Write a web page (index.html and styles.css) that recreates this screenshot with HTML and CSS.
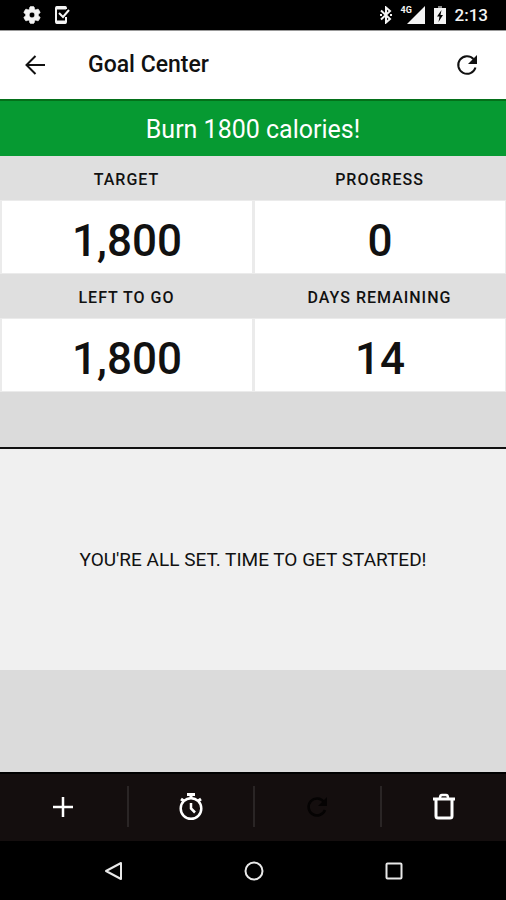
FILE: index.html
```
<!DOCTYPE html>
<html lang="en">
<head>
<meta charset="utf-8">
<meta name="viewport" content="width=device-width, initial-scale=1">
<title>Goal Center</title>
<link rel="stylesheet" href="styles.css">
</head>
<body>
<div class="screen">
  <div class="status">
    <div class="status-group">
      <svg class="icon-status" viewBox="0 0 24 24" aria-hidden="true"><path fill="currentColor" stroke="currentColor" stroke-width="1" d="M19.43 12.98c.04-.32.07-.64.07-.98s-.03-.66-.07-.98l2.11-1.65c.19-.15.24-.42.12-.64l-2-3.46c-.12-.22-.39-.3-.61-.22l-2.49 1c-.52-.4-1.08-.73-1.69-.98l-.38-2.65C14.46 2.18 14.25 2 14 2h-4c-.25 0-.46.18-.49.42l-.38 2.65c-.61.25-1.17.59-1.69.98l-2.49-1c-.23-.09-.49 0-.61.22l-2 3.46c-.13.22-.07.49.12.64l2.11 1.65c-.04.32-.07.65-.07.98s.03.66.07.98l-2.11 1.65c-.19.15-.24.42-.12.64l2 3.46c.12.22.39.3.61.22l2.49-1c.52.4 1.08.73 1.69.98l.38 2.65c.03.24.24.42.49.42h4c.25 0 .46-.18.49-.42l.38-2.65c.61-.25 1.17-.59 1.69-.98l2.49 1c.23.09.49 0 .61-.22l2-3.46c.12-.22.07-.49-.12-.64l-2.11-1.65zM12 15.5c-1.93 0-3.5-1.57-3.5-3.5s1.57-3.5 3.5-3.5 3.5 1.57 3.5 3.5-1.57 3.5-3.5 3.5z"/></svg>
      <svg class="icon-status" viewBox="0 0 20 20" fill="none" stroke="currentColor" aria-hidden="true"><path stroke-width="2" d="M15 4V3q0-1-1-1H6Q5 2 5 3v14q0 1 1 1h8q1 0 1-1v-5"/><path stroke-width="3" d="M5 3h10M5 17h10"/><path stroke-width="2" d="M8 8l4 4 6-7"/></svg>
    </div>
    <div class="status-group">
      <svg class="icon-bluetooth" viewBox="0 0 12 18" fill="none" stroke="currentColor" stroke-width="2" aria-hidden="true"><path d="M1 4.500l9 8.500-4 3.500v-15L10 5l-9 8.500"/><path d="M0 9h2M10 9h2"/></svg>
      <div class="signal">
        <svg class="icon-signal" viewBox="0 0 24 18" aria-hidden="true"><path fill="currentColor" d="M24 0v18H6z"/></svg>
        <span class="network">4G</span>
      </div>
      <svg class="icon-battery" viewBox="0 0 12 18" aria-hidden="true"><path fill="#888" d="M4 0h4v2H4z"/><path fill="currentColor" d="M0 2h12v16H0z"/><path fill="#000" d="M7.500 4L3 10.500h2.500L4.500 16 9 9H6.500z"/></svg>
      <time class="clock">2:13</time>
    </div>
  </div>

  <header class="appbar">
    <button class="icon-button" type="button" aria-label="Back">
      <svg class="icon" viewBox="0 0 26 26" fill="none" stroke="currentColor" stroke-width="2" aria-hidden="true"><path d="M23 13H5M13.500 4L4.500 13l9 9"/></svg>
    </button>
    <h1 class="title">Goal Center</h1>
    <button class="icon-button" type="button" aria-label="Refresh">
      <svg class="icon" viewBox="0 0 26 26" aria-hidden="true"><path fill="none" stroke="currentColor" stroke-width="2" d="M21.500 15.500A8.800 8.800 0 1 1 19.500 7"/><path fill="currentColor" d="M23 3v9h-9z"/></svg>
    </button>
  </header>

  <main class="content">
    <h2 class="banner">Burn 1800 calories!</h2>
    <dl class="stats">
      <div class="stat"><dt class="label">TARGET</dt><dd class="value">1,800</dd></div>
      <div class="stat"><dt class="label">PROGRESS</dt><dd class="value">0</dd></div>
      <div class="stat"><dt class="label">LEFT TO GO</dt><dd class="value">1,800</dd></div>
      <div class="stat"><dt class="label">DAYS REMAINING</dt><dd class="value">14</dd></div>
    </dl>
    <p class="message">YOU'RE ALL SET. TIME TO GET STARTED!</p>
  </main>

  <div class="toolbar">
    <button class="tool" type="button" aria-label="Add">
      <svg class="icon-tool" viewBox="0 0 30 30" fill="none" stroke="currentColor" stroke-width="2.500" aria-hidden="true"><path d="M15 5v20M5 15h20"/></svg>
    </button>
    <button class="tool" type="button" aria-label="Timer">
      <svg class="icon-tool" viewBox="0 0 30 30" fill="none" stroke="currentColor" stroke-width="2.500" aria-hidden="true"><circle cx="15" cy="16.500" r="10.300"/><path d="M15 11v5.500l4 4"/><path stroke-width="3" d="M11 2.500h8M15 3v4M5 7l3 2M25 7l-3 2"/></svg>
    </button>
    <button class="tool" type="button" aria-label="Restart" disabled>
      <svg class="icon-tool" viewBox="0 0 30 30" aria-hidden="true"><path fill="none" stroke="currentColor" stroke-width="2.500" d="M23 18A8.500 8.500 0 1 1 22 10"/><path fill="currentColor" d="M25 5v9h-9z"/></svg>
    </button>
    <button class="tool" type="button" aria-label="Delete">
      <svg class="icon-tool" viewBox="0 0 30 30" fill="none" stroke="currentColor" stroke-width="3" aria-hidden="true"><path d="M7 7v17q0 2 2 2h12q2 0 2-2V7"/><path d="M4 7h22"/><path stroke-width="2.500" d="M11 6q0-3 2-3h4q2 0 2 3"/></svg>
    </button>
  </div>

  <nav class="sysnav" aria-label="System">
    <button class="sys" type="button" aria-label="Back"><svg class="icon-sys" viewBox="0 0 20 20" fill="none" stroke="currentColor" stroke-width="2" aria-hidden="true"><path stroke-linejoin="round" d="M17 2v16L2 10z"/></svg></button>
    <button class="sys" type="button" aria-label="Home"><svg class="icon-sys" viewBox="0 0 20 20" fill="none" stroke="currentColor" stroke-width="2" aria-hidden="true"><circle cx="10" cy="10" r="8.500"/></svg></button>
    <button class="sys" type="button" aria-label="Overview"><svg class="icon-sys" viewBox="0 0 20 20" fill="none" stroke="currentColor" stroke-width="2" aria-hidden="true"><rect x="2.500" y="2.500" width="15" height="15" rx="1"/></svg></button>
  </nav>
</div>
</body>
</html>
```
FILE: styles.css
```
* {
  box-sizing: border-box;
}

body {
  margin: 0;
  font-family: Roboto, "Liberation Sans", sans-serif;
  color: #111;
}

h1, h2, p, dl, dd {
  margin: 0;
}

button {
  display: flex;
  align-items: center;
  justify-content: center;
  padding: 0;
  border: 0;
  background: none;
  color: inherit;
}

svg {
  display: block;
}

.screen {
  display: flex;
  flex-direction: column;
  min-height: 100vh;
  background: #dbdbdb;
}

.status {
  display: flex;
  align-items: center;
  justify-content: space-between;
  height: 30px;
  padding: 0 18px 0 22px;
  background: #000;
  color: #f4f4f4;
}

.status-group {
  display: flex;
  align-items: center;
  gap: 9px;
}

.icon-status {
  width: 20px;
  height: 20px;
}

.icon-bluetooth {
  width: 12px;
  height: 18px;
}

.signal {
  position: relative;
}

.icon-signal {
  width: 24px;
  height: 18px;
}

.network {
  position: absolute;
  top: 0;
  left: 0;
  font-size: 9px;
  line-height: 9px;
  font-weight: 700;
}

.icon-battery {
  width: 12px;
  height: 18px;
}

.clock {
  font-size: 17px;
  line-height: 30px;
  font-weight: 500;
}

.appbar {
  display: flex;
  align-items: center;
  padding: 0 26px 0 22px;
  height: 69px;
  border-top: 1px solid #999;
  background: #fff;
}

.icon-button,
.icon {
  width: 26px;
  height: 26px;
}

.title {
  flex: 1;
  padding-left: 40px;
  font-size: 23px;
  line-height: 30px;
  font-weight: 500;
}

.content {
  flex: 1;
}

.banner {
  padding: 15px 16px 12px;
  border-top: 2px solid #04701a;
  background: #069a32;
  color: #fff;
  font-size: 25px;
  line-height: 28px;
  font-weight: 400;
  text-align: center;
}

.stats {
  display: grid;
  grid-template-columns: 1fr 1fr;
  padding-bottom: 55px;
}

.stat {
  text-align: center;
}

.label {
  padding: 12px 0 8px;
  background: #dfdfdf;
  font-size: 16px;
  line-height: 24px;
  font-weight: 500;
  letter-spacing: 1px;
}

.value {
  border: solid #ebebeb;
  border-width: 1px 1px 1px 2px;
  background: #fff;
  padding-top: 8px;
  font-size: 44px;
  line-height: 64px;
  font-weight: 500;
}

.message {
  padding: 96px 16px 95px;
  border-top: 2px solid #111;
  background: #f0f0f0;
  font-size: 19px;
  line-height: 30px;
  text-align: center;
}

.toolbar {
  display: grid;
  grid-template-columns: repeat(4, 1fr);
  padding: 12px 0 14px;
  border-top: 2px solid #000;
  background: #140e0e;
  color: #fff;
}

.tool {
  height: 41px;
}

.tool + .tool {
  border-left: 2px solid #2a2525;
}

.tool:disabled {
  color: #050303;
}

.icon-tool {
  width: 30px;
  height: 30px;
}

.sysnav {
  display: grid;
  grid-template-columns: repeat(3, 1fr);
  padding: 0 42px 0 44px;
  background: #000;
  color: #e8e8e8;
}

.sys {
  height: 59px;
}

.icon-sys {
  width: 20px;
  height: 20px;
}
```
